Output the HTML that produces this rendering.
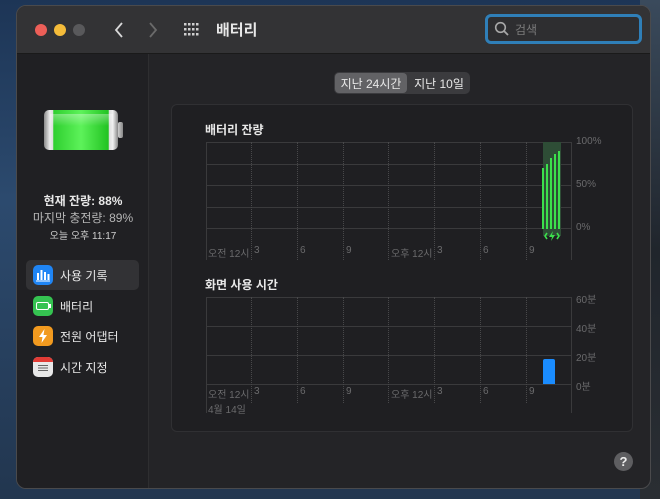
<!DOCTYPE html>
<html><head><meta charset="utf-8"><style>
*{margin:0;padding:0;box-sizing:border-box}
body{width:660px;height:499px;overflow:hidden;position:relative;font-family:"Liberation Sans","Noto Sans CJK KR",sans-serif;background:linear-gradient(180deg,#1d3556 0%,#2c4a6e 40%,#22364f 100%)}
.rock{position:absolute;right:0;top:0;width:20px;height:499px;background:linear-gradient(180deg,#3a4a5c,#20252c 50%,#2a2e33)}
.win{position:absolute;left:16px;top:5px;width:635px;height:484px;border-radius:10px;background:#242427;border:1px solid #4a4a4c;overflow:hidden}
.title{position:absolute;left:0;top:0;width:100%;height:48px;background:#333335;border-bottom:1px solid #1a1a1a}
.dot{position:absolute;top:18px;width:12px;height:12px;border-radius:50%}
.side{position:absolute;left:0;top:48px;width:132px;height:436px;background:#202023;border-right:1px solid #2e2e30}
.t{position:absolute;white-space:nowrap;color:#e8e8e8}
.card{position:absolute;left:154px;top:98px;width:462px;height:328px;background:#1f1f22;border:1px solid #303033;border-radius:6px}
.g{position:absolute;height:1px;background:#3a3a3c}
.v{position:absolute;width:0;border-left:1px dotted #48484a}
.lab{position:absolute;font-size:10px;color:#6a6a6c;white-space:nowrap}
.ic{position:absolute;left:16px;width:20px;height:20px;border-radius:5px}
</style></head><body>
<div class="rock"></div>
<div class="win">
 <div class="title">
  <div class="dot" style="left:18px;background:#ed5f58"></div>
  <div class="dot" style="left:37px;background:#f5bc3a"></div>
  <div class="dot" style="left:56px;background:#59595b"></div>
  <svg style="position:absolute;left:96px;top:15px" width="12" height="18"><path d="M9 2 L3 9 L9 16" stroke="#d8d8d8" stroke-width="1.8" fill="none"/></svg>
  <svg style="position:absolute;left:130px;top:15px" width="12" height="18"><path d="M3 2 L9 9 L3 16" stroke="#6a6a6a" stroke-width="1.8" fill="none"/></svg>
  <svg style="position:absolute;left:167px;top:17px" width="18" height="15" fill="#cfcfcf"><g>
   <rect x="0" y="0" width="2.5" height="2.5"/><rect x="4" y="0" width="2.5" height="2.5"/><rect x="8" y="0" width="2.5" height="2.5"/><rect x="12" y="0" width="2.5" height="2.5"/>
   <rect x="0" y="5" width="2.5" height="2.5"/><rect x="4" y="5" width="2.5" height="2.5"/><rect x="8" y="5" width="2.5" height="2.5"/><rect x="12" y="5" width="2.5" height="2.5"/>
   <rect x="0" y="10" width="2.5" height="2.5"/><rect x="4" y="10" width="2.5" height="2.5"/><rect x="8" y="10" width="2.5" height="2.5"/><rect x="12" y="10" width="2.5" height="2.5"/></g></svg>
  <div class="t" style="left:199px;top:13px;font-size:15px;font-weight:bold">배터리</div>
  <div style="position:absolute;left:468px;top:8px;width:157px;height:30px;border:3px solid #2f7fb8;border-radius:6px;background:#2e2e30"></div>
  <svg style="position:absolute;left:477px;top:15px" width="16" height="16"><circle cx="6.5" cy="6.5" r="4.8" stroke="#a8a8a8" stroke-width="1.6" fill="none"/><path d="M10 10 L14 14" stroke="#a8a8a8" stroke-width="1.8"/></svg>
  <div class="t" style="left:498px;top:15px;font-size:12px;color:#7a7a7a">검색</div>
 </div>
 <div class="side">
  <div style="position:absolute;left:27px;top:56px;width:74px;height:40px;border-radius:5px;background:linear-gradient(90deg,#8a8a8a,#ececec 8%,#ddd 12%,#2fcf2f 13%,#5df25a 50%,#22c322 87%,#ddd 88%,#f0f0f0 93%,#888)"></div>
  <div style="position:absolute;left:101px;top:68px;width:5px;height:16px;border-radius:2px;background:linear-gradient(90deg,#ccc,#888)"></div>
  <div style="position:absolute;left:33px;top:60px;width:63px;height:12px;background:linear-gradient(180deg,rgba(255,255,255,.35),rgba(255,255,255,0))"></div>
  <div class="t" style="left:0;width:132px;text-align:center;top:138px;font-size:12px;font-weight:bold">현재 잔량: 88%</div>
  <div class="t" style="left:0;width:132px;text-align:center;top:155px;font-size:12px;color:#b5b5b5">마지막 충전량: 89%</div>
  <div class="t" style="left:0;width:132px;text-align:center;top:173px;font-size:10px;color:#cfcfcf">오늘 오후 11:17</div>
  <div style="position:absolute;left:9px;top:206px;width:113px;height:30px;border-radius:5px;background:#323235"></div>
  <div class="ic" style="top:211px;background:#1f85f5"><svg width="20" height="20"><g fill="#fff"><rect x="4" y="8" width="2" height="7"/><rect x="7.5" y="5" width="2" height="10"/><rect x="11" y="7" width="2" height="8"/><rect x="14.5" y="9" width="2" height="6"/><rect x="3" y="15.5" width="14" height="1"/></g></svg></div>
  <div class="t" style="left:43px;top:213px;font-size:12px">사용 기록</div>
  <div class="ic" style="top:242px;background:#35c351"><div style="position:absolute;left:3px;top:6px;width:13px;height:8px;border:1.5px solid #fff;border-radius:2px"></div><div style="position:absolute;left:16px;top:8px;width:1.5px;height:4px;background:#fff"></div></div>
  <div class="t" style="left:43px;top:244px;font-size:12px">배터리</div>
  <div class="ic" style="top:272px;background:#f29a1f"><svg width="20" height="20"><path d="M11.5 3 L6 11 L9.5 11 L8.5 17 L14 9 L10.5 9 Z" fill="#fff"/></svg></div>
  <div class="t" style="left:43px;top:274px;font-size:12px">전원 어댑터</div>
  <div class="ic" style="top:303px;background:#e8e8e8;overflow:hidden"><div style="height:5px;background:#e23b35"></div><div style="position:absolute;left:5px;top:8px;width:10px;height:7px;background:repeating-linear-gradient(180deg,#666 0 1px,transparent 1px 2.5px)"></div></div>
  <div class="t" style="left:43px;top:305px;font-size:12px">시간 지정</div>
 </div>
 <div style="position:absolute;left:317px;top:66px;width:136px;height:22px;border-radius:5px;background:#3b3b3e"></div>
 <div style="position:absolute;left:318px;top:67px;width:72px;height:20px;border-radius:4px;background:#626265"></div>
 <div class="t" style="left:318px;top:69px;width:72px;text-align:center;font-size:12px">지난 24시간</div>
 <div class="t" style="left:391px;top:69px;width:62px;text-align:center;font-size:12px">지난 10일</div>
 <div class="card">
  <div class="t" style="left:33px;top:16px;font-size:12px;font-weight:bold">배터리 잔량</div>
  <div class="g" style="left:34px;top:37px;width:366px"></div>
  <div class="g" style="left:34px;top:59px;width:366px"></div>
  <div class="g" style="left:34px;top:80px;width:366px"></div>
  <div class="g" style="left:34px;top:102px;width:366px"></div>
  <div class="g" style="left:34px;top:123px;width:366px"></div>
  <div style="position:absolute;left:34px;top:37px;width:1px;height:118px;background:#3a3a3c"></div>
  <div style="position:absolute;left:399px;top:37px;width:1px;height:118px;background:#3a3a3c"></div>
  <div class="v" style="left:79px;top:37px;height:118px"></div>
  <div class="v" style="left:125px;top:37px;height:118px"></div>
  <div class="v" style="left:171px;top:37px;height:118px"></div>
  <div class="v" style="left:216px;top:37px;height:118px"></div>
  <div class="v" style="left:262px;top:37px;height:118px"></div>
  <div class="v" style="left:308px;top:37px;height:118px"></div>
  <div class="v" style="left:354px;top:37px;height:118px"></div>
  <div style="position:absolute;left:371px;top:37px;width:18px;height:94px;background:#2e4d36"></div>
  <div style="position:absolute;left:370px;top:63px;width:2px;height:61px;background:#3ce04c"></div>
  <div style="position:absolute;left:374px;top:59px;width:2px;height:65px;background:#3ce04c"></div>
  <div style="position:absolute;left:378px;top:53px;width:2px;height:71px;background:#3ce04c"></div>
  <div style="position:absolute;left:382px;top:49px;width:2px;height:75px;background:#3ce04c"></div>
  <div style="position:absolute;left:386px;top:46px;width:2px;height:78px;background:#3ce04c"></div>
  <svg style="position:absolute;left:371px;top:125px" width="18" height="12"><path d="M4 3 L2 6 L4 9 M14 3 L16 6 L14 9" stroke="#3ce04c" stroke-width="1.6" fill="none"/><path d="M10 1 L6 7 L9 7 L8 11 L12 5 L9 5 Z" fill="#3ce04c"/></svg>
  <div class="lab" style="left:404px;top:31px">100%</div>
  <div class="lab" style="left:404px;top:74px">50%</div>
  <div class="lab" style="left:404px;top:117px">0%</div>
  <div class="lab" style="left:36px;top:140px">오전 12시</div>
  <div class="lab" style="left:82px;top:140px">3</div>
  <div class="lab" style="left:128px;top:140px">6</div>
  <div class="lab" style="left:174px;top:140px">9</div>
  <div class="lab" style="left:219px;top:140px">오후 12시</div>
  <div class="lab" style="left:265px;top:140px">3</div>
  <div class="lab" style="left:311px;top:140px">6</div>
  <div class="lab" style="left:357px;top:140px">9</div>

  <div class="t" style="left:33px;top:171px;font-size:12px;font-weight:bold">화면 사용 시간</div>
  <div class="g" style="left:34px;top:192px;width:366px"></div>
  <div class="g" style="left:34px;top:221px;width:366px"></div>
  <div class="g" style="left:34px;top:250px;width:366px"></div>
  <div class="g" style="left:34px;top:279px;width:366px"></div>
  <div style="position:absolute;left:34px;top:192px;width:1px;height:116px;background:#3a3a3c"></div>
  <div style="position:absolute;left:399px;top:192px;width:1px;height:116px;background:#3a3a3c"></div>
  <div class="v" style="left:79px;top:192px;height:106px"></div>
  <div class="v" style="left:125px;top:192px;height:106px"></div>
  <div class="v" style="left:171px;top:192px;height:106px"></div>
  <div class="v" style="left:216px;top:192px;height:106px"></div>
  <div class="v" style="left:262px;top:192px;height:106px"></div>
  <div class="v" style="left:308px;top:192px;height:106px"></div>
  <div class="v" style="left:354px;top:192px;height:106px"></div>
  <div style="position:absolute;left:371px;top:254px;width:12px;height:25px;background:#1a8cff;border-radius:2px 2px 0 0"></div>
  <div class="lab" style="left:404px;top:186px">60분</div>
  <div class="lab" style="left:404px;top:215px">40분</div>
  <div class="lab" style="left:404px;top:244px">20분</div>
  <div class="lab" style="left:404px;top:273px">0분</div>
  <div class="lab" style="left:36px;top:281px">오전 12시</div>
  <div class="lab" style="left:82px;top:281px">3</div>
  <div class="lab" style="left:128px;top:281px">6</div>
  <div class="lab" style="left:174px;top:281px">9</div>
  <div class="lab" style="left:219px;top:281px">오후 12시</div>
  <div class="lab" style="left:265px;top:281px">3</div>
  <div class="lab" style="left:311px;top:281px">6</div>
  <div class="lab" style="left:357px;top:281px">9</div>
  <div class="lab" style="left:36px;top:296px">4월 14일</div>
 </div>
 <div style="position:absolute;left:597px;top:446px;width:19px;height:19px;border-radius:50%;background:#5e5e61;color:#eee;font-size:13px;font-weight:bold;text-align:center;line-height:19px">?</div>
</div>
</body></html>
